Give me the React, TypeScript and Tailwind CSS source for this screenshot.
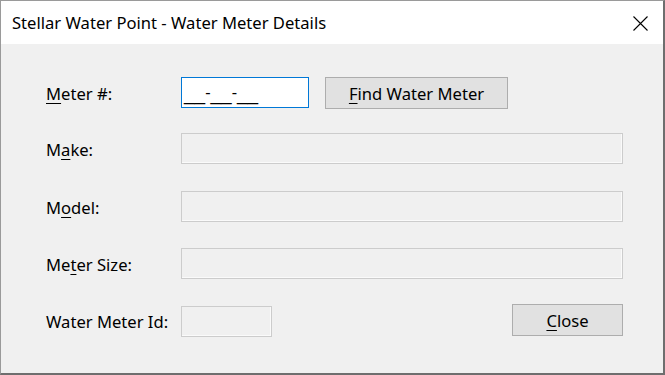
import React from 'react';

const font = { fontFamily: '"Noto Sans", "Open Sans", sans-serif' };

function U({ children }: { children: React.ReactNode }) {
  return <span className="underline underline-offset-[3px] decoration-1">{children}</span>;
}

function Field({ className = '' }: { className?: string }) {
  return (
    <div className={`h-[31px] border border-[#cccccc] bg-[#f0f0f0] ${className}`}>
      <div className="h-full w-full border-r border-b border-[#fafafa]" />
    </div>
  );
}

function Label({ children }: { children: React.ReactNode }) {
  return <div className="w-[135px] shrink-0 pt-[3px] text-[16.6px] text-black">{children}</div>;
}

function Blank() {
  return <span className="text-[19px]" style={{ fontFamily: '"Liberation Sans", sans-serif' }}>__</span>;
}

export default function App() {
  return (
    <div className="w-[665px] h-[375px] bg-white" style={font}>
      <div className="flex h-full w-full flex-col border-t border-l border-[#9a9a9a] border-r-2 border-b-2 border-r-[#6e6e6e] border-b-[#6e6e6e]">
        <div className="flex h-[43px] shrink-0 items-center justify-between bg-white pl-[11px] pr-[15px]">
          <span className="pt-[2px] text-[16.6px] text-black">Stellar Water Point - Water Meter Details</span>
          <svg width="15" height="15" viewBox="0 0 15 15" className="mt-[1px] text-black">
            <path d="M0.5 0.5 L14.5 14.5 M14.5 0.5 L0.5 14.5" stroke="currentColor" strokeWidth="1.1" fill="none" />
          </svg>
        </div>
        <div className="flex flex-1 flex-col bg-[#f0f0f0] pl-[45px] pr-[40px] pt-[33px]">
          <div className="flex h-[31px] items-center">
            <Label>
              <U>M</U>eter #:
            </Label>
            <div className="flex h-[31px] w-[128px] items-end border border-[#0078d7] bg-white pb-[4px] pl-[2px] leading-none text-black">
              <Blank />
              <span className="mb-[2px] text-[16.6px]">-</span>
              <Blank />
              <span className="mb-[2px] text-[16.6px]">-</span>
              <Blank />
            </div>
            <button className="ml-[16px] h-[32px] w-[183px] border border-[#adadad] bg-[#e1e1e1] pt-[3px] text-[16.6px] text-black">
              <U>F</U>ind Water Meter
            </button>
          </div>
          <div className="mt-[25px] flex h-[31px] items-center">
            <Label>
              M<U>a</U>ke:
            </Label>
            <Field className="flex-1" />
          </div>
          <div className="mt-[27px] flex h-[31px] items-center">
            <Label>
              M<U>o</U>del:
            </Label>
            <Field className="flex-1" />
          </div>
          <div className="mt-[26px] flex h-[31px] items-center">
            <Label>
              Me<U>t</U>er Size:
            </Label>
            <Field className="flex-1" />
          </div>
          <div className="mt-[26px] flex h-[32px] items-center">
            <Label>Water Meter Id:</Label>
            <Field className="w-[91px]" />
            <div className="flex-1" />
            <button className="-mt-[2px] h-[32px] w-[111px] border border-[#adadad] bg-[#e1e1e1] pt-[3px] text-[16.6px] text-black">
              <U>C</U>lose
            </button>
          </div>
        </div>
      </div>
    </div>
  );
}
